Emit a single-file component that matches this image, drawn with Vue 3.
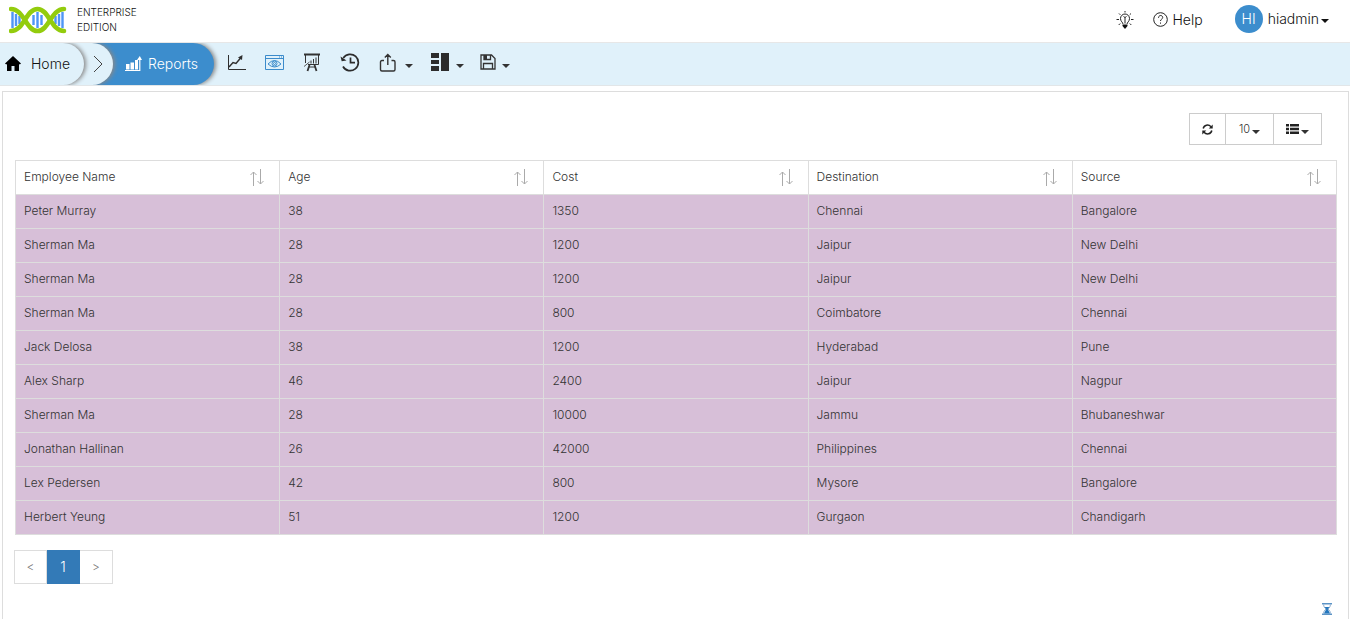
<script setup>
const columns = ['Employee Name', 'Age', 'Cost', 'Destination', 'Source']
const rows = [
  ['Peter Murray', 38, 1350, 'Chennai', 'Bangalore'],
  ['Sherman Ma', 28, 1200, 'Jaipur', 'New Delhi'],
  ['Sherman Ma', 28, 1200, 'Jaipur', 'New Delhi'],
  ['Sherman Ma', 28, 800, 'Coimbatore', 'Chennai'],
  ['Jack Delosa', 38, 1200, 'Hyderabad', 'Pune'],
  ['Alex Sharp', 46, 2400, 'Jaipur', 'Nagpur'],
  ['Sherman Ma', 28, 10000, 'Jammu', 'Bhubaneshwar'],
  ['Jonathan Hallinan', 26, 42000, 'Philippines', 'Chennai'],
  ['Lex Pedersen', 42, 800, 'Mysore', 'Bangalore'],
  ['Herbert Yeung', 51, 1200, 'Gurgaon', 'Chandigarh'],
]
</script>

<template>
  <div class="page">
    <header class="top">
      <a href="#" class="brand">
        <svg width="58" height="28" viewBox="0 0 58 28" fill="none" aria-hidden="true">
          <g stroke="#4f95f5" stroke-width="2.400">
            <path d="M3.500 6v16M7 8v12M10.500 10v8M24.500 9v10M28.500 6v16M32.500 9v10M46.500 10v8M50 8v12M53.500 6v16" />
          </g>
          <g stroke="#93cc0d" stroke-width="4.600" stroke-linecap="round">
            <path d="M2 3C15 3 17 25 28.500 25S42 3 55 3" />
            <path d="M2 25C15 25 17 3 28.500 3S42 25 55 25" />
          </g>
        </svg>
        <span class="edition">ENTERPRISE<br />EDITION</span>
      </a>
      <div class="account">
        <button class="plain tip" aria-label="Tips">
          <svg width="18" height="18" viewBox="0 0 18 18" fill="none" stroke="#222" stroke-width="1">
            <path d="M7 13C7 11.500 4.500 10.500 4.500 7.500a4.500 4.500 0 0 1 9 0c0 3-2.500 4-2.500 5.500M7.500 5.500l1.500 1 1.500-1M9 6.500v6" />
            <path d="M9 0v1.500M3 2.500l1.300 1.300M15 2.500l-1.300 1.300M.5 8.500H3M15 8.500h2.500M2.700 14l1.500-1.500M15.300 14l-1.500-1.500" />
            <path d="M6.500 13.500h5v1.500L9 18l-2.500-3z" fill="#111" stroke="none" />
          </svg>
        </button>
        <a href="#" class="help">
          <svg width="15" height="15" viewBox="0 0 15 15" fill="none" stroke="#222">
            <circle cx="7.500" cy="7.500" r="6.800" />
            <path d="M5.500 5.800c0-3 4.200-3 4.200-.3 0 1.700-2.200 1.600-2.200 3.500M7.500 10.500v1.200" />
          </svg>
          Help
        </a>
        <button class="plain user"><span class="avatar">HI</span>hiadmin<i class="caret"></i></button>
      </div>
    </header>

    <nav class="bar">
      <a href="#" class="crumb home">
        <svg width="16" height="16" viewBox="0 0 16 16" fill="#000"><path d="M8 0l8 7.500-1.200 1L14 8v7H9.500v-5h-3v5H2V8l-.8.500L0 7.500z" /></svg>
        Home
      </a>
      <span class="crumb step">
        <svg width="10" height="18" viewBox="0 0 10 18" fill="none" stroke="#444"><path d="M1 1l8 8-8 8" /></svg>
      </span>
      <a href="#" class="crumb reports">
        <svg width="17" height="16" viewBox="0 0 17 16" fill="#fff"><path d="M1 8h3.500v5.500H1zM5.500 6.500H9v7H5.500zM10 4h3v9.500h-3zM14.200 3h1.200v12H0v-1h14.200zM12 4l2.800-4L17 4z" /></svg>
        Reports
      </a>
      <div class="tools">
        <button class="plain" aria-label="Line chart">
          <svg width="19" height="17" viewBox="0 0 19 17" fill="none" stroke="#2f2f2f"><path d="M1.500 1v14.500H19" /><path d="M2 13l4-4.500 3 1 5-6" stroke-width="1.500" /><path d="M11 3.500L15.500 1 15 6z" fill="#2f2f2f" stroke="none" /></svg>
        </button>
        <button class="plain" aria-label="Preview">
          <svg width="19" height="17" viewBox="0 0 19 17" fill="none" stroke="#3b8bcb"><path d="M.5 1.500h18v14H.5zM.5 4.500h18M14 3h1M16 3h1" /><path d="M3 10q6.500-7 13 0-6.500 6-13 0z" /><circle cx="9.500" cy="9.500" r="2.500" /><circle cx="9.500" cy="9.500" r="1" /></svg>
        </button>
        <button class="plain" aria-label="Presentation">
          <svg width="18" height="19" viewBox="0 0 18 19" fill="none" stroke="#333"><path d="M1 1.500h16" stroke-width="2" /><path d="M2.500 2v8M15.500 2v9.500H5" /><path d="M1 13.500l5.500-4.500" stroke="#555" /><path d="M8 7.500v3M10.500 6v4.500M13 4.500v6" /><path d="M6.500 12l-2 6M11.500 12l2 6" stroke-width="1.800" /><path d="M6 14h6" /></svg>
        </button>
        <button class="plain" aria-label="History">
          <svg width="20" height="19" viewBox="0 0 20 19" fill="none" stroke="#2c2c2c" stroke-width="1.700"><path d="M3.300 5A8.200 8.200 0 1 1 3 13.500M10.500 4.500v5.200H15" /><path d="M.5 3.500l1.200 4.700 4.800-.7z" fill="#2c2c2c" stroke="none" /></svg>
        </button>
        <button class="plain menu" aria-label="Export">
          <svg width="18" height="19" viewBox="0 0 18 19" fill="none" stroke="#333" stroke-width="1.400"><path d="M5 7.500H3Q1.500 7.500 1.500 9v7.500Q1.500 18 3 18h11.500q1.500 0 1.500-1.500V9q0-1.500-1.500-1.500h-2M8.800 12V2M5.800 4.500l3-3 3 3" /></svg>
          <i class="caret"></i>
        </button>
        <button class="plain menu" aria-label="Layout">
          <svg width="18" height="18" viewBox="0 0 18 18" fill="#2c2c2c"><path d="M0 0h8v5H0zM0 7h8v4H0zM0 13h8v5H0zM10 0h8v18h-8z" /></svg>
          <i class="caret"></i>
        </button>
        <button class="plain menu" aria-label="Save">
          <svg width="16" height="16" viewBox="0 0 16 16" fill="none" stroke="#333" stroke-width="1.300"><path d="M1 1h10.500L15 4.500V15H1zM4 1v4.500h6.500V1M3.500 15V9.500h9V15" /><path d="M4 1h3v4H4z" fill="#333" stroke="none" /></svg>
          <i class="caret"></i>
        </button>
      </div>
    </nav>

    <main class="panel">
      <div class="options">
        <button aria-label="Refresh">
          <svg width="11" height="11" viewBox="0 0 11 11" fill="none" stroke="#222" stroke-width="1.500"><path d="M1.200 4.500C2 .7 6.500 0 9 2.700M9.800 6.500C9 10.300 4.500 11 2 8.300" /><path d="M10.700 .5v4H6.800zM.3 10.500V6.500h4z" fill="#222" stroke="none" /></svg>
        </button>
        <button>10<i class="caret"></i></button>
        <button aria-label="Columns">
          <svg width="13" height="10" viewBox="0 0 13 10" fill="#222"><path d="M0 0h3v2.500H0zM4 0h9v2.500H4zM0 3.700h3v2.500H0zM4 3.700h9v2.500H4zM0 7.500h3V10H0zM4 7.500h9V10H4z" /></svg>
          <i class="caret"></i>
        </button>
      </div>

      <table>
        <thead>
          <tr>
            <th v-for="c in columns" :key="c" scope="col">
              <div class="head">
                {{ c }}
                <button class="plain" :aria-label="`Sort by ${c}`">
                  <svg width="14" height="18" viewBox="0 0 14 18" fill="none" stroke="#aaa"><path d="M3.500 18V4M.5 7l3-3 3 3M10.500 1v15M7.500 13l3 3 3-3" /></svg>
                </button>
              </div>
            </th>
          </tr>
        </thead>
        <tbody>
          <tr v-for="(r, i) in rows" :key="i">
            <td v-for="(v, j) in r" :key="j">{{ v }}</td>
          </tr>
        </tbody>
      </table>

      <div class="pager">
        <button aria-label="Previous page">&lt;</button>
        <button class="current" aria-current="page">1</button>
        <button aria-label="Next page">&gt;</button>
      </div>

      <svg class="timer" width="10" height="12" viewBox="0 0 10 12"><path d="M0 0h10v1.500H0zM0 10.500h10V12H0z" fill="#5c94c6" /><path d="M1.500 1.500Q1.500 4 4 6 1.500 8 1.500 10.500M8.500 1.500Q8.500 4 6 6q2.500 2 2.500 4.500" fill="none" stroke="#8eaed0" /><path d="M2.500 4h5L5.700 6 8 10.500H2L4.300 6z" fill="#2376bd" /></svg>
    </main>
  </div>
</template>

<style>
body {
  margin: 0;
  background: #fff;
}
</style>

<style scoped>
.page {
  display: flex;
  flex-direction: column;
  min-height: 100vh;
  font: 12px/18px Inter, "Liberation Sans", sans-serif;
  font-weight: 300;
  color: #333;
}
button {
  font: inherit;
  color: inherit;
  cursor: pointer;
}
a {
  color: #111;
  text-decoration: none;
}
svg {
  display: block;
  flex: none;
}
.plain {
  display: flex;
  align-items: center;
  padding: 0;
  border: 0;
  background: none;
}
.caret {
  border: 4px solid transparent;
  border-top-color: currentColor;
  border-bottom: 0;
}
.top {
  display: flex;
  justify-content: space-between;
  height: 42px;
  border-bottom: 1px solid #e7e7e7;
}
.brand {
  display: flex;
  align-items: center;
  gap: 10px;
  padding: 0 0 2px 9px;
  font-size: 10px;
  line-height: 15px;
}
.account {
  display: flex;
  align-items: center;
  padding: 0 21px 5px 0;
  font-size: 14px;
  color: #111;
}
.tip {
  margin-right: 19px;
}
.help {
  display: flex;
  align-items: center;
  gap: 4px;
  margin-right: 32px;
}
.tip,
.help {
  padding-top: 2px;
}
.user .caret {
  margin: 5px 0 0 2px;
}
.avatar {
  width: 28px;
  margin-right: 5px;
  border-radius: 50%;
  background: #3c8dcd;
  color: #fff;
  line-height: 28px;
}
.bar {
  display: flex;
  height: 42px;
  background: #e0f1fa;
  border-bottom: 1px solid #e2e6e8;
}
.crumb {
  position: relative;
  display: flex;
  align-items: center;
  border-radius: 0 21px 21px 0;
  background: #e0f1fa;
  box-shadow: 2px 0 4px #888;
  font-size: 14px;
  clip-path: inset(0 -8px 0 0);
}
.home {
  z-index: 2;
  gap: 10px;
  padding: 0 14px 0 5px;
}
.step {
  z-index: 1;
  width: 50px;
  margin-left: -21px;
  justify-content: flex-end;
  padding-right: 10px;
  box-sizing: border-box;
}
.step svg {
  margin-bottom: 1px;
}
.reports {
  gap: 6px;
  margin-left: -21px;
  padding: 0 16px 0 33px;
  background: #3c8dcd;
  color: #fff;
}
.tools {
  display: flex;
  align-items: center;
  gap: 19px;
  margin-left: 13px;
  padding-bottom: 4px;
}
.menu {
  gap: 8px;
}
.menu .caret {
  margin-top: 8px;
}
.menu:nth-last-child(2) {
  gap: 7px;
  margin-left: -1px;
}
.menu:last-child {
  gap: 6px;
  margin-left: -3px;
}
.panel {
  flex: 1;
  display: flex;
  flex-direction: column;
  margin: 5px 1px 0 2px;
  padding: 21px 11px 4px;
  border: 1px solid #ddd;
  border-bottom: 0;
}
.options {
  display: flex;
  align-self: flex-end;
  margin: 0 15px 15px 0;
}
.options button {
  display: flex;
  align-items: center;
  justify-content: center;
  gap: 2px;
  height: 32px;
  min-width: 49px;
  padding: 0 12px;
  border: 1px solid #ccc;
  background: #fff;
  font-size: 11px;
}
.options button:first-child {
  min-width: 37px;
}
.options button + button {
  margin-left: -1px;
}
.options .caret {
  margin-top: 5px;
}
table {
  width: calc(100% - 1px);
  margin-left: 1px;
  table-layout: fixed;
  border-collapse: collapse;
}
th,
td {
  height: 31px;
  padding: 0 8px 2px;
  border: 1px solid #ddd;
  text-align: left;
  font-weight: 300;
}
td {
  background: #d7bfd8;
}
.head {
  display: flex;
  align-items: center;
  justify-content: space-between;
  padding-right: 7px;
}
.pager {
  display: flex;
  margin-top: 15px;
}
.pager button {
  width: 33px;
  height: 34px;
  padding: 0;
  border: 1px solid #ddd;
  background: #fff;
  color: #777;
}
.pager button + button {
  border-left: 0;
}
.pager .current {
  border-color: #337ab7;
  background: #337ab7;
  color: #fff;
  font-size: 14px;
}
.timer {
  align-self: flex-end;
  margin: auto 5px 0 0;
}
</style>
